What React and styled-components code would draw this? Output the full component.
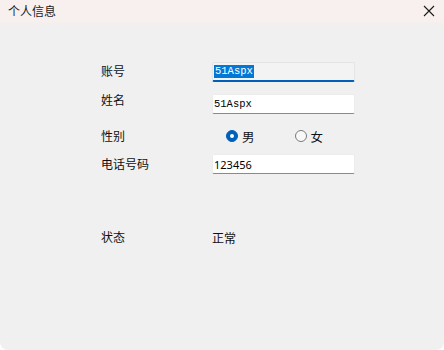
import React, { useState } from "react";
import styled, { createGlobalStyle } from "styled-components";

const Global = createGlobalStyle`
  html, body {
    margin: 0;
    padding: 0;
    background: #ffffff;
  }
  body {
    font-family: "Noto Sans CJK SC", "Noto Sans", sans-serif;
  }
`;

const Window = styled.div`
  width: 444px;
  height: 350px;
  display: flex;
  flex-direction: column;
  background: #f0f0f0;
  border-radius: 0 0 8px 8px;
  overflow: hidden;
`;

const TitleBar = styled.div`
  height: 22px;
  flex: none;
  display: flex;
  align-items: center;
  justify-content: space-between;
  padding: 0 9px 3px 8px;
  background: linear-gradient(#f7f0ee, #f7f0ee 80%, #f3efee);
  color: #1b1b1b;
  font-size: 12px;
  line-height: 1;
`;

const CloseBtn = styled.div`
  width: 12px;
  height: 12px;
  display: flex;
`;

const Form = styled.div`
  padding: 37px 0 0 101px;
  display: flex;
  flex-direction: column;
`;

const Row = styled.div`
  display: grid;
  grid-template-columns: 111px 143px;
  align-items: center;
  height: 20px;
  margin-bottom: ${(p) => p.$gap}px;
`;

const Label = styled.div`
  font-size: 12px;
  color: #111;
  line-height: 20px;
  transform: translateY(${(p) => p.$shift || 0}px);
`;

const Field = styled.div`
  height: 20px;
  box-sizing: border-box;
  display: flex;
  align-items: center;
  padding: 0 0 0 1px;
  background: ${(p) => (p.$focus ? "#f3f3f3" : "#ffffff")};
  border: 1px solid ${(p) => (p.$focus ? "#e4e4e4" : "#ececec")};
  border-bottom: ${(p) => (p.$focus ? "2px solid #005fb8" : "1px solid #8a8a8a")};
  border-radius: 2px;
  font-family: ${(p) => (p.$mono ? '"Liberation Mono", monospace' : '"Noto Sans", sans-serif')};
  font-size: ${(p) => (p.$mono ? "10.5px" : "11px")};
  color: #000;
`;

const Selected = styled.span`
  background: #0078d7;
  color: #fff;
  padding: 0 1px;
  line-height: 13px;
`;

const RadioGroup = styled.div`
  display: flex;
  align-items: center;
  padding-left: 14px;
  gap: 40px;
`;

const RadioItem = styled.label`
  display: flex;
  align-items: center;
  gap: 4px;
  font-size: 12.5px;
  color: #111;
  cursor: pointer;
`;

const Dot = styled.span`
  width: 12px;
  height: 12px;
  box-sizing: border-box;
  border-radius: 50%;
  display: flex;
  align-items: center;
  justify-content: center;
  background: ${(p) => (p.$on ? "#005fb8" : "#f8f8f8")};
  border: 1px solid ${(p) => (p.$on ? "#005fb8" : "#7a7a7a")};
  &::after {
    content: "";
    display: ${(p) => (p.$on ? "block" : "none")};
    width: 4px;
    height: 4px;
    border-radius: 50%;
    background: #fff;
  }
`;

const Value = styled.div`
  font-size: 12px;
  color: #111;
`;

export default function App() {
  const [sex, setSex] = useState("男");
  return (
    <>
      <Global />
      <Window>
        <TitleBar>
          <span>个人信息</span>
          <CloseBtn>
            <svg width="12" height="12" viewBox="0 0 12 12">
              <path d="M1 1 L11 11 M11 1 L1 11" stroke="#1b1b1b" strokeWidth="1.1" />
            </svg>
          </CloseBtn>
        </TitleBar>
        <Form>
          <Row $gap={12}>
            <Label $shift={-1}>账号</Label>
            <Field $focus $mono>
              <Selected>51Aspx</Selected>
            </Field>
          </Row>
          <Row $gap={12}>
            <Label $shift={-4}>姓名</Label>
            <Field $mono>51Aspx</Field>
          </Row>
          <Row $gap={8}>
            <Label>性别</Label>
            <RadioGroup>
              {["男", "女"].map((s) => (
                <RadioItem key={s} onClick={() => setSex(s)}>
                  <Dot $on={sex === s} />
                  {s}
                </RadioItem>
              ))}
            </RadioGroup>
          </Row>
          <Row $gap={53}>
            <Label>电话号码</Label>
            <Field>123456</Field>
          </Row>
          <Row $gap={0}>
            <Label>状态</Label>
            <Value>正常</Value>
          </Row>
        </Form>
      </Window>
    </>
  );
}
